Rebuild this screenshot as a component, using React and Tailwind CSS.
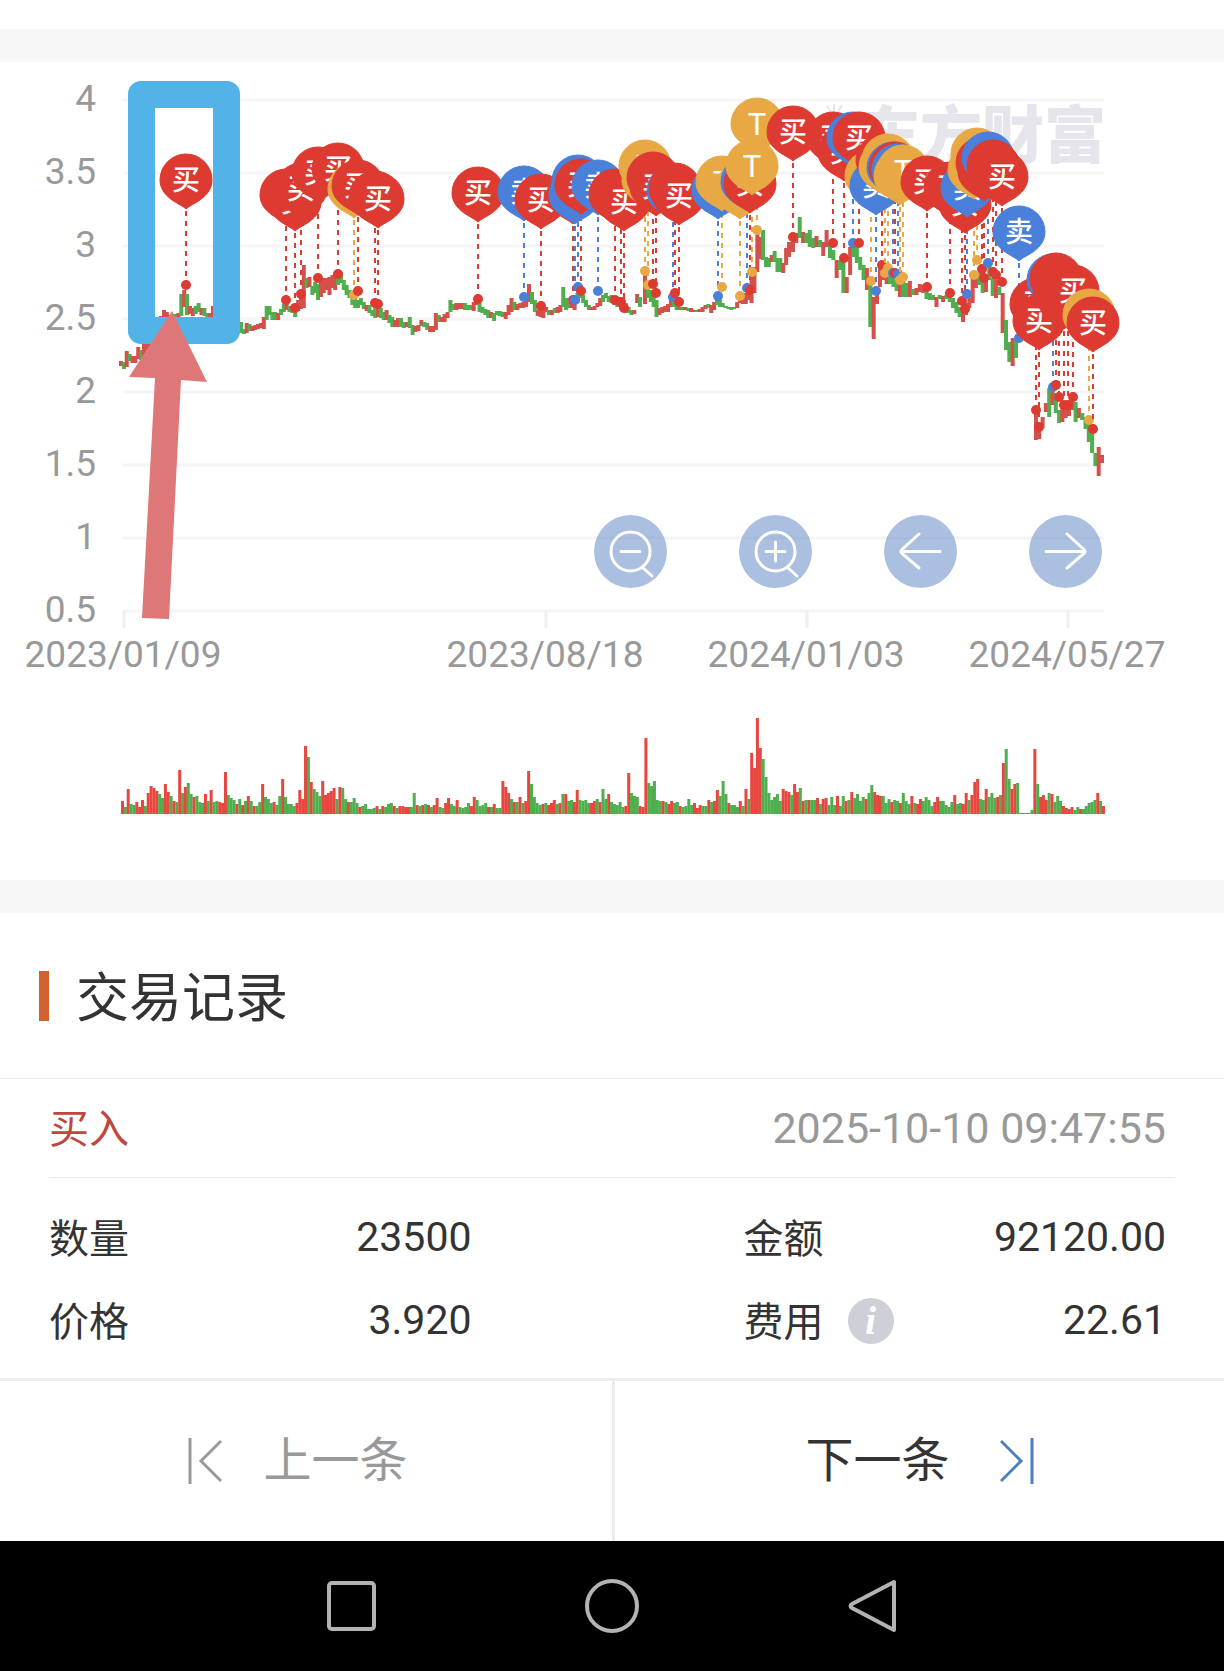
// src/App.jsx
const UP    = '#e8473f'
const DOWN  = '#4fae4d'
const TYPES = {
  b: { color: '#dd3a31', label: '买' },
  s: { color: '#4a80da', label: '卖' },
  t: { color: '#e8a945', label: 'T' },
}

const yTicks = ['4', '3.5', '3', '2.5', '2', '1.5', '1', '0.5']
const xTicks = [
  { x: 124,  label: '2023/01/09' },
  { x: 546,  label: '2023/08/18' },
  { x: 807,  label: '2024/01/03' },
  { x: 1068, label: '2024/05/27' },
]

// candles by segment: first x, last x, then direction + high-low
const segments = [
  [121, 144, 'r361-366 g362-369 r351-367 g354-361 r356-363 r356-363 r347-359 g350-360 r344-356'],
  [147, 161, 'r340-350 r335-346 g332-342 r326-338 r320-332 r316-326'],
  [164, 213, 'r310-319 r312-319 r315-320 r314-320 g314-320 r313-319 g294-316 r290-307 g294-315 r306-314 r308-316 g306-314 g303-312 r308-315 g308-316 g313-318 r313-318 r306-317'],
  [241, 398, 'g322-333 g329-334 r323-333 g324-331 r326-331 r325-330 r324-329 r323-328 r317-329 g306-320 g306-315 g312-320 g312-320 r313-320 g309-315 g304-312 r302-310 g306-312 g308-313 g309-317 r300-311 r294-309 r265-308 g278-288 r277-287 g286-295 g282-293 g284-300 r280-297 r278-293 r278-290 r277-295 r275-288 r273-290 g273-285 g272-283 g280-290 g285-295 g290-298 g293-305 g297-308 g300-308 g298-305 g302-309 r305-311 g305-313 g310-316 g305-318 r307-317 g308-318 g312-320 r310-320 g315-323 g317-327 r320-327 r318-327'],
  [401, 529, 'g318-327 g322-328 r322-327 g317-328 g325-335 r326-332 r325-331 r320-326 g322-327 g323-330 r326-332 r326-332 r313-330 g315-322 r317-322 r314-322 r312-318 g300-312 g304-310 r303-310 r303-309 r303-309 g303-310 g305-310 g305-310 r302-311 r297-305 g303-312 g307-313 g309-315 g310-318 r312-318 g313-321 g311-315 g311-316 g312-317 r312-319 r305-315 r298-312 g302-310 r304-310 r303-308 r302-308 r301-307 r284-302'],
  [532, 640, 'g292-304 g300-312 r310-316 r307-317 r307-318 r307-312 g310-315 r310-315 g308-313 r307-313 r305-312 g287-307 g298-310 g302-308 r300-308 r298-310 g293-303 g292-298 g295-303 g300-307 g305-310 r307-310 r306-310 r303-307 r298-306 g295-302 g293-298 g296-302 g295-303 r300-305 g298-307 r297-307 r298-307 g303-313 g307-313 g310-315 r310-314 r294-303 g297-307'],
  [645, 789, 'r273-304 g287-298 g290-302 g293-307 g300-317 r308-315 r307-313 r306-312 r304-312 r297-307 g298-307 g303-310 r307-310 g307-310 r307-310 g308-311 r308-312 r310-312 g310-312 r309-312 r307-312 r305-309 g304-308 r305-313 r302-310 g298-305 g298-307 g303-307 g306-308 g307-309 g307-310 g307-309 r302-308 r297-303 r295-304 r293-304 r293-300 r272-303 r267-293 r230-272 r237-259 g230-260 g257-267 g258-267 r255-262 g251-262 g258-272 g258-272 r263-273 r248-265 r242-257'],
  [793, 877, 'r238-252 r233-243 g217-238 r232-243 g233-243 g230-247 g238-248 r236-247 g240-247 r242-256 r230-247 g243-258 g250-260 r260-278 g260-270 g260-293 r277-293 r247-275 g247-257 g247-263 g257-270 g265-280 r268-290 g280-327 r297-339 r287-304'],
  [880, 963, 'r267-287 r262-280 r276-284 g273-284 g277-287 g280-291 r280-297 g277-297 g283-297 r281-297 g289-295 r288-295 r284-292 r285-293 g287-299 g293-300 g295-300 r297-307 g295-299 r296-302 g295-299 g296-302 g298-308 g302-313 g307-317 r310-322'],
  [966, 1016, 'r303-315 r298-308 r278-303 r277-288 g273-285 g280-293 r277-292 g267-280 g278-296 r280-298 g287-295 r293-333 g320-350 g342-362 r338-366 g340-358'],
  [1036, 1102, 'r412-440 r423-439 r417-428 r403-412 g388-417 r390-405 g393-413 g410-423 r408-422 r407-418 r408-416 r400-410 g402-422 r408-418 g413-420 g417-429 g423-442 g430-453 g453-466 r447-476 r455-463'],
]

const candles = segments.flatMap(([from, to, data]) => {
  const items = data.split(' ')
  return items.map((s, i) => {
    const [high, low] = s.slice(1).split('-').map(Number)
    return { x: from + (i * (to - from)) / (items.length - 1), up: s[0] === 'r', high, low }
  })
})

// trades: type, x, pin centre y, price point y
const trades = [
  ['b', 186, 180, 285],
  ['b', 286, 195, 300], ['b', 295, 202, 308], ['b', 301, 189, 294], ['b', 318, 173, 278],
  ['b', 338, 169, 274], ['t', 354, 189, 295], ['b', 358, 186, 291], ['b', 375, 197, 303], ['b', 378, 199, 304],
  ['b', 478, 193, 299], ['s', 524, 192, 297], ['b', 541, 200, 306],
  ['b', 573, 195, 300], ['s', 575, 195, 300], ['s', 578, 181, 287], ['b', 581, 185, 291], ['s', 598, 186, 291],
  ['b', 615, 195, 300], ['b', 621, 198, 302], ['b', 624, 202, 308],
  ['t', 645, 166, 271], ['t', 648, 180, 285], ['b', 653, 178, 284], ['b', 656, 187, 293],
  ['s', 673, 191, 297], ['b', 675, 189, 293], ['b', 679, 196, 302],
  ['s', 718, 190, 296], ['t', 722, 182, 287], ['t', 740, 190, 296],
  ['s', 747, 182, 288], ['b', 750, 184, 290], ['t', 757, 124, 230], ['t', 752, 166, 272],
  ['b', 793, 132, 237], ['b', 833, 138, 243], ['b', 844, 152, 258], ['s', 853, 138, 243], ['b', 859, 138, 243],
  ['t', 871, 176, 281], ['s', 876, 186, 291], ['b', 882, 160, 265], ['t', 885, 167, 273], ['t', 888, 160, 268],
  ['s', 893, 168, 273], ['b', 895, 168, 273], ['s', 898, 170, 274], ['t', 900, 176, 280], ['t', 903, 171, 277],
  ['b', 927, 182, 287], ['b', 950, 188, 293], ['b', 962, 197, 301], ['b', 965, 204, 309], ['s', 967, 188, 294],
  ['t', 974, 170, 275], ['t', 977, 154, 260], ['b', 982, 163, 269], ['b', 984, 172, 278], ['s', 988, 158, 263],
  ['b', 993, 166, 272], ['b', 996, 170, 275], ['b', 1002, 177, 282],
  ['s', 1019, 232, 338],
  ['b', 1036, 304, 410], ['b', 1039, 321, 427], ['s', 1053, 280, 387], ['b', 1056, 279, 385], ['b', 1059, 290, 397],
  ['b', 1064, 300, 405], ['b', 1068, 300, 405], ['b', 1073, 291, 397],
  ['t', 1089, 315, 420], ['b', 1093, 323, 429],
]

// a pin that sits right under a later one shows no label
const isCovered = i => trades.slice(i + 1).some(t => Math.hypot(t[1] - trades[i][1], t[2] - trades[i][2]) < 13)

const volumes = (
  'r13 g7 r25 g10 g9 r12 r7 r14 g8 r21 r28 r26 r23 g20 g16 r30 r22 g18 r13 g12 r44 g21 r27 g31 g20 r17 g18 g12 g11 r20 ' +
  'g13 r24 g12 g13 r12 r11 r42 g19 g16 g14 r10 g15 r9 g13 r18 g13 r8 g8 g12 r30 g17 g15 g11 r12 g9 g18 r35 g17 g10 g10 ' +
  'g8 r11 r24 r15 r68 g57 r32 g25 g22 g18 r33 r19 r21 r23 r26 g15 r27 g26 g15 r12 g12 g16 g11 r7 g8 g10 g5 g5 g6 r8 ' +
  'g5 r8 g7 g10 g11 r8 g6 r8 r8 r7 r7 g7 g21 r9 g8 r9 g10 r9 g7 r9 r16 g7 g6 r11 r16 g10 g8 r14 g7 g6 ' +
  'g7 g11 r8 r17 g14 g8 g9 g11 r7 g7 r10 g6 g6 r33 r27 r21 g15 r12 g12 r17 g11 r13 r43 g30 g17 g11 g9 r10 g11 r9 ' +
  'r11 r14 g10 r11 g20 r20 g13 g14 r12 r24 g14 g13 g14 g11 r11 r13 g15 r12 g25 g15 r20 g12 g10 g9 g12 g7 r8 r41 g21 g18 ' +
  'g17 r8 r7 r76 g31 g28 g33 g14 g13 r13 g12 r10 r13 g11 g12 r8 g7 g8 g15 g9 r11 r6 r9 g8 g8 r14 g12 r13 r24 g18 ' +
  'g33 g20 r11 g9 g9 g7 r13 g8 r25 g15 r61 r46 r96 r66 g55 g37 g21 g14 g17 g20 g13 r25 r23 r22 g19 r30 r22 g26 r13 g14 ' +
  'r14 g14 g14 r16 g10 r15 r16 g9 g17 g9 r18 g8 g18 r13 g14 r22 g16 g20 g13 g17 r15 g21 g29 r22 r19 r18 g18 g11 g15 r12 ' +
  'g14 g13 r11 g21 g13 g10 r18 g11 r10 r15 g13 g17 g14 g8 r12 r17 g13 g13 g9 g7 g12 r19 g10 g11 r10 r21 g14 r19 r32 r35 ' +
  'g15 g14 r25 g17 g21 g16 r17 g19 r51 g65 g35 r25 r30 g31 g1 g1 g1 g1 g4 r65 g30 r17 r19 r14 g21 r20 g12 g18 g13 r8 ' +
  'r6 r5 r7 g4 g7 r5 g5 g8 g11 g12 g14 r21 g13 r8'
).split(' ')

const PIN = 'M0 29C-3 26-8 24-14 20C-22 14-26 8-26 0A26 26 0 0 1 26 0C26 8 22 14 14 20C8 24 3 26 0 29Z'

function Pin({ type, x, y, showLabel }) {
  const { color, label } = TYPES[type]
  return (
    <g transform={`translate(${x} ${y})`}>
      <path d={PIN} fill={color} stroke={color} />
      {showLabel && (
        <text
          textAnchor="middle"
          y={type === 't' ? 11 : 10}
          className={type === 't'
            ? 'fill-white font-[Roboto,sans-serif] text-[31px]'
            : "fill-white font-['Noto_Sans_CJK_SC',sans-serif] text-[28px] font-medium"}
        >
          {label}
        </text>
      )}
    </g>
  )
}

function PriceChart() {
  return (
    <svg viewBox="0 62 1224 620" className="block w-full h-auto" role="img" aria-label="价格走势">
      {yTicks.map((t, i) => (
        <g key={t}>
          <line x1="123" x2="1104" y1={100 + i * 73} y2={100 + i * 73} stroke="#f5f5f5" strokeWidth="3" />
          <text x="96" y={111 + i * 73} textAnchor="end" className="fill-[#999999] text-[37px]">{t}</text>
        </g>
      ))}
      {xTicks.map(t => (
        <g key={t.label}>
          <line x1={t.x} x2={t.x} y1="611" y2="628" stroke="#efefef" strokeWidth="3" />
          <text x={t.x - 1} y="667" textAnchor="middle" className="fill-[#999999] text-[37px]">{t.label}</text>
        </g>
      ))}

      {/* Watermark */}
      <path d="M827 106l4 6M834 104v8M842 105l-4 7" stroke="#e6e5ec" strokeWidth="2" />
      <text x="858" y="158" className="fill-[#e6e5ec] font-['Noto_Sans_CJK_SC',sans-serif] text-[62px] font-black">东方财富</text>

      {candles.map((c, i) => (
        <rect key={i} x={c.x - 2} y={c.high} width="4" height={c.low - c.high} fill={c.up ? '#d5504a' : DOWN} />
      ))}

      {trades.map(([type, x, y, price], i) => (
        <g key={i}>
          <line x1={x} x2={x} y1={y + 31} y2={price} stroke={TYPES[type].color} strokeWidth="2" strokeDasharray="5 5" />
          <circle cx={x} cy={price} r="5" fill={TYPES[type].color} />
        </g>
      ))}
      {trades.map(([type, x, y], i) => <Pin key={i} type={type} x={x} y={y} showLabel={!isCovered(i)} />)}

      {/* Highlight frame and arrow */}
      <path
        fillRule="evenodd"
        fill="#52b3e8"
        d="M141 81H227A13 13 0 0 1 240 94V331A13 13 0 0 1 227 344H141A13 13 0 0 1 128 331V94A13 13 0 0 1 141 81ZM155 108V317H213V108Z"
      />
      <path d="M172 311L207 382L181 380L169 619L142 618L155 378L129 377Z" fill="#de7878" />
    </svg>
  )
}

function VolumeChart() {
  return (
    <svg viewBox="0 682 1224 136" className="block w-full h-auto" role="img" aria-label="成交量">
      {volumes.map((v, i) => {
        const h = Number(v.slice(1))
        return <rect key={i} x={121 + i * 2.86} y={814 - h} width="3" height={h} fill={v[0] === 'r' ? UP : DOWN} />
      })}
    </svg>
  )
}

const chartButtons = [
  { label: '缩小', d: 'M56 36.5a19.5 19.5 0 1 1-39 0a19.5 19.5 0 1 1 39 0M48 52l10 9M27 36.5h19' },
  { label: '放大', d: 'M56 36.5a19.5 19.5 0 1 1-39 0a19.5 19.5 0 1 1 39 0M48 52l10 9M27 36.5h19M36.5 27v19' },
  { label: '向左', d: 'M56 36.5H17M35 19L18 34.5q-2 2 0 4L35 53' },
  { label: '向右', d: 'M17 36.5h39M38 19l17 15.5q2 2 0 4L38 53' },
]

function Field({ label, value, children }) {
  return (
    <div className="flex h-[83px] items-center justify-between">
      <dt className="flex items-center gap-6 pt-1 text-[40px]">{label}{children}</dt>
      <dd className="text-[41px]">{value}</dd>
    </div>
  )
}

export default function App() {
  return (
    <div className="min-h-screen bg-white font-[Roboto,'Noto_Sans_CJK_SC',sans-serif] text-[#333333]">
      <div className="h-[29px]" />
      <div className="h-[33px] bg-[#f7f7f7]" />

      {/* Chart */}
      <section className="relative pb-[62px]">
        <PriceChart />
        <VolumeChart />
        <div className="absolute right-[10%] top-[453px] flex gap-[72px]">
          {chartButtons.map(b => (
            <button key={b.label} type="button" aria-label={b.label} className="size-[73px] rounded-full bg-[#5781c1]/50">
              <svg viewBox="0 0 73 73" fill="none" stroke="#fff" strokeWidth="3" strokeLinecap="round">
                <path d={b.d} />
              </svg>
            </button>
          ))}
        </div>
      </section>

      <div className="h-[33px] bg-[#f7f7f7]" />

      {/* Trade records */}
      <section>
        <div className="flex h-[166px] items-center border-b border-[#ebebeb] pl-[39px]">
          <span className="h-[50px] w-[10px] bg-[#d2622d]" />
          <h2 className="ml-[27px] pt-2 text-[53px]">交易记录</h2>
        </div>

        <div className="mx-[49px] flex h-[99px] items-center justify-between border-b border-[#ebebeb] pr-[9px]">
          <span className="pt-1 text-[40px] text-[#c04640]">买入</span>
          <time className="text-[43px] text-[#999999]">2025-10-10 09:47:55</time>
        </div>

        <dl className="grid grid-cols-2 gap-x-[272px] pb-4 pl-[49px] pr-[58px] pt-[18px]">
          <Field label="数量" value="23500" />
          <Field label="金额" value="92120.00" />
          <Field label="价格" value="3.920" />
          <Field label="费用" value="22.61">
            <button
              type="button"
              aria-label="费用说明"
              className="-mt-1 size-[46px] rounded-full bg-[#cdd0d6] font-['Liberation_Serif',serif] text-[40px] font-bold italic leading-[46px] text-white"
            >
              i
            </button>
          </Field>
        </dl>
      </section>

      {/* Previous / next */}
      <div className="grid h-[163px] grid-cols-2 border-t-3 border-[#ececec] text-[48px]">
        <button type="button" className="flex items-center justify-center gap-[41px] pr-4 text-[#999999]">
          <svg viewBox="0 0 34 46" className="h-[46px] w-[34px]" fill="none" stroke="currentColor" strokeWidth="3">
            <path d="M2 0v46M33 3L13 23l20 20" />
          </svg>
          上一条
        </button>
        <button type="button" className="flex items-center justify-center gap-[50px] border-l-3 border-[#ececec]">
          下一条
          <svg viewBox="0 0 34 46" className="h-[46px] w-[34px]" fill="none" stroke="#4a7fc0" strokeWidth="3">
            <path d="M32 0v46M1 3l20 20L1 43" />
          </svg>
        </button>
      </div>

      {/* System navigation */}
      <nav className="flex h-[130px] items-center justify-center gap-[206px] bg-black text-[#b3b3b3]">
        <button type="button" aria-label="最近任务">
          <svg viewBox="0 0 54 54" className="size-[54px]" fill="none" stroke="currentColor" strokeWidth="4">
            <rect x="4" y="4" width="45" height="46" rx="3" />
          </svg>
        </button>
        <button type="button" aria-label="主屏幕">
          <svg viewBox="0 0 54 54" className="size-[54px]" fill="none" stroke="currentColor" strokeWidth="4">
            <circle cx="27" cy="27" r="25" />
          </svg>
        </button>
        <button type="button" aria-label="返回">
          <svg viewBox="0 0 54 54" className="size-[54px]" fill="none" stroke="currentColor" strokeWidth="4" strokeLinejoin="round">
            <path d="M49 3v48L7 29q-3-2 0-4Z" />
          </svg>
        </button>
      </nav>
    </div>
  )
}
